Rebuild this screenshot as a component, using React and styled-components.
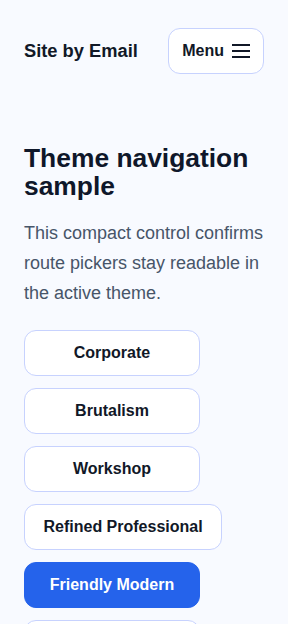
import React from "react";
import styled, { createGlobalStyle } from "styled-components";

const Global = createGlobalStyle`
  html, body { margin: 0; padding: 0; background: #f8faff; }
  body { font-family: "Liberation Sans", Arial, sans-serif; color: #0f172a; }
  * { box-sizing: border-box; }
`;

const Page = styled.div`
  height: 624px;
  overflow: hidden;
  background: #f8faff;
  padding: 0 24px;
`;

const Header = styled.header`
  display: flex;
  align-items: center;
  justify-content: space-between;
  height: 102px;
`;

const Brand = styled.div`
  font-size: 18.3px;
  font-weight: 700;
  color: #111827;
`;

const MenuButton = styled.button`
  display: flex;
  align-items: center;
  gap: 8px;
  height: 46px;
  padding: 0 13px 0 13px;
  border: 1px solid #c7d2fe;
  border-radius: 12px;
  background: #ffffff;
  font-family: inherit;
  font-size: 16px;
  font-weight: 700;
  color: #111827;
  cursor: pointer;
`;

const Main = styled.main`
  padding-top: 43px;
`;

const Title = styled.h1`
  margin: 0;
  font-size: 26.4px;
  line-height: 27.5px;
  font-weight: 700;
  color: #0f172a;
`;

const Lead = styled.p`
  margin: 18px 0 0;
  font-size: 18px;
  line-height: 30px;
  color: #475569;
`;

const List = styled.nav`
  display: flex;
  flex-direction: column;
  align-items: flex-start;
  gap: 12px;
  margin-top: 22px;
`;

const Pill = styled.button`
  min-width: 176px;
  height: 46px;
  padding: 0 18.5px;
  border-radius: 12px;
  border: 1px solid ${(p) => (p.$active ? "#2563eb" : "#c7d2fe")};
  background: ${(p) => (p.$active ? "#2563eb" : "#ffffff")};
  color: ${(p) => (p.$active ? "#ffffff" : "#111827")};
  font-family: inherit;
  font-size: 16px;
  font-weight: 700;
  flex-shrink: 0;
  cursor: pointer;
`;

const Burger = () => (
  <svg width="18" height="14" viewBox="0 0 18 14" fill="none" stroke="#111827" strokeWidth="2" strokeLinecap="butt">
    <path d="M0 1h18M0 7h18M0 13h18" />
  </svg>
);

const themes = ["Corporate", "Brutalism", "Workshop", "Refined Professional", "Friendly Modern", "Playful"];

export default function App() {
  return (
    <>
      <Global />
      <Page>
        <Header>
          <Brand>Site by Email</Brand>
          <MenuButton>
            Menu <Burger />
          </MenuButton>
        </Header>
        <Main>
          <Title>Theme navigation sample</Title>
          <Lead>This compact control confirms route pickers stay readable in the active theme.</Lead>
          <List>
            {themes.map((t) => (
              <Pill key={t} $active={t === "Friendly Modern"}>{t}</Pill>
            ))}
          </List>
        </Main>
      </Page>
    </>
  );
}
